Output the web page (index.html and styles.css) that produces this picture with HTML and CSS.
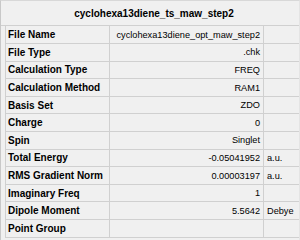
FILE: index.html
```html
<!DOCTYPE html>
<html lang="en">
<head>
    <meta charset="UTF-8">
    <title>Job Summary</title>
    <link rel="stylesheet" href="styles.css">
</head>
<body>
    <div class="summary">
        <div class="summary-title">cyclohexa13diene_ts_maw_step2</div>
        <table class="summary-table">
            <colgroup>
                <col class="col-name">
                <col class="col-value">
                <col class="col-unit">
            </colgroup>
            <tr><th>File Name</th><td class="value">cyclohexa13diene_opt_maw_step2</td><td class="unit"></td></tr>
            <tr><th>File Type</th><td class="value">.chk</td><td class="unit"></td></tr>
            <tr><th>Calculation Type</th><td class="value">FREQ</td><td class="unit"></td></tr>
            <tr><th>Calculation Method</th><td class="value">RAM1</td><td class="unit"></td></tr>
            <tr><th>Basis Set</th><td class="value">ZDO</td><td class="unit"></td></tr>
            <tr><th>Charge</th><td class="value">0</td><td class="unit"></td></tr>
            <tr><th>Spin</th><td class="value">Singlet</td><td class="unit"></td></tr>
            <tr><th>Total Energy</th><td class="value">-0.05041952</td><td class="unit">a.u.</td></tr>
            <tr><th>RMS Gradient Norm</th><td class="value">0.00003197</td><td class="unit">a.u.</td></tr>
            <tr><th>Imaginary Freq</th><td class="value">1</td><td class="unit"></td></tr>
            <tr><th>Dipole Moment</th><td class="value">5.5642</td><td class="unit">Debye</td></tr>
            <tr><th>Point Group</th><td class="value"></td><td class="unit"></td></tr>
        </table>
    </div>
</body>
</html>
```

FILE: styles.css
```css
* {
    margin: 0;
    padding: 0;
    box-sizing: border-box;
}

body {
    font-family: "Liberation Sans", Arial, sans-serif;
    background: #f0f0f0;
    color: #000;
    overflow: hidden;
}

.summary {
    width: 300px;
    height: 240px;
    border-top: 1px solid #d8d8d8;
    border-left: 1px solid #c8c8c8;
    border-right: 1px solid #e4e4e4;
    background: #f0f0f0;
    padding-top: 1px;
}

.summary-title {
    height: 24px;
    line-height: 24px;
    text-align: center;
    font-weight: bold;
    font-size: 10px;
    padding-left: 8px;
    border-bottom: 1px solid #d0d0d0;
}

.summary-table {
    margin-left: 4px;
    width: 294px;
    border-collapse: collapse;
    table-layout: fixed;
}

.col-name {
    width: 104px;
}

.col-value {
    width: 154px;
}

.summary-table th,
.summary-table td {
    height: 17.6px;
    border: 1px solid #d0d0d0;
    border-top: none;
    white-space: nowrap;
    overflow: hidden;
    vertical-align: middle;
}

.summary-table th {
    text-align: left;
    font-size: 10px;
    font-weight: bold;
    padding-left: 2px;
}

.summary-table td.value {
    text-align: right;
    font-size: 9.2px;
    padding-right: 3px;
}

.summary-table td.unit {
    text-align: left;
    font-size: 9.2px;
    padding-left: 3px;
    border-right: none;
}
```
